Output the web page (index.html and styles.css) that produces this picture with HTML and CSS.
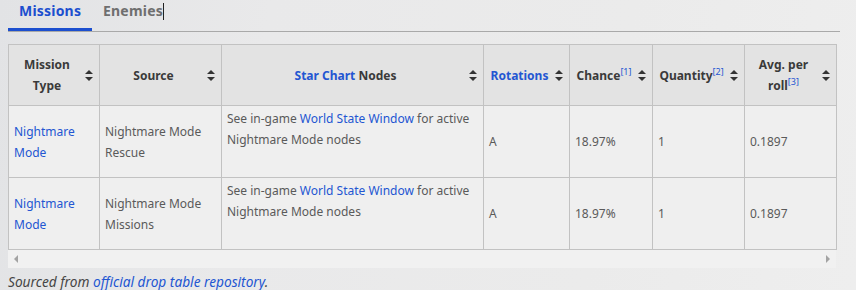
FILE: index.html
```html
<!DOCTYPE html>
<html>
<head>
<meta charset="utf-8">
<link rel="stylesheet" href="styles.css">
</head>
<body>
<div class="page">
  <div class="tabs">
    <div class="tab active">Missions</div>
    <div class="tab">Enemies<span class="caret"></span></div>
  </div>
  <div class="scroller">
    <table class="drops">
      <colgroup>
        <col class="c1"><col class="c2"><col class="c3"><col class="c4"><col class="c5"><col class="c6"><col class="c7">
      </colgroup>
      <thead>
        <tr>
          <th><span class="th-in"><span class="lbl">Mission<br>Type</span><span class="sort"></span></span></th>
          <th><span class="th-in"><span class="lbl">Source</span><span class="sort"></span></span></th>
          <th><span class="th-in"><span class="lbl"><a>Star Chart</a> Nodes</span><span class="sort"></span></span></th>
          <th><span class="th-in"><span class="lbl"><a>Rotations</a></span><span class="sort"></span></span></th>
          <th><span class="th-in"><span class="lbl">Chance<sup>[1]</sup></span><span class="sort"></span></span></th>
          <th><span class="th-in"><span class="lbl">Quantity<sup>[2]</sup></span><span class="sort"></span></span></th>
          <th><span class="th-in"><span class="lbl">Avg. per<br>roll<sup>[3]</sup></span><span class="sort"></span></span></th>
        </tr>
      </thead>
      <tbody>
        <tr>
          <td><a>Nightmare<br>Mode</a></td>
          <td>Nightmare Mode<br>Rescue</td>
          <td class="nodes">See in-game <a>World State Window</a> for active<br>Nightmare Mode nodes</td>
          <td>A</td>
          <td>18.97%</td>
          <td>1</td>
          <td>0.1897</td>
        </tr>
        <tr>
          <td><a>Nightmare<br>Mode</a></td>
          <td>Nightmare Mode<br>Missions</td>
          <td class="nodes">See in-game <a>World State Window</a> for active<br>Nightmare Mode nodes</td>
          <td>A</td>
          <td>18.97%</td>
          <td>1</td>
          <td>0.1897</td>
        </tr>
      </tbody>
    </table>
    <div class="hscroll"><span class="arr left"></span><span class="arr right"></span></div>
  </div>
  <p class="source">Sourced from <a>official drop table repository</a>.</p>
</div>
</body>
</html>
```
FILE: styles.css
```css
html, body {
  margin: 0;
  padding: 0;
}
body {
  width: 856px;
  height: 290px;
  overflow: hidden;
  background: linear-gradient(100deg, #e2e3e5 0%, #e9e9ea 30%, #ebebeb 70%, #eeeeee 100%);
  font-family: "Noto Sans", "DejaVu Sans", sans-serif;
  color: #5a5a5a;
}
.page {
  padding: 0 0 0 8px;
}
a {
  color: #2356d2;
  text-decoration: none;
}
.tabs {
  display: flex;
  width: 832px;
  height: 31px;
  border-bottom: 1px solid #a9a9a9;
  box-sizing: content-box;
}
.tab {
  font-size: 14px;
  font-weight: 700;
  color: #6f6f6f;
  padding: 0 11px;
  height: 28px;
  line-height: 21px;
  letter-spacing: 0.2px;
}
.tab.active {
  color: #1c4fcf;
  border-bottom: 3px solid #1c4fcf;
  width: 62px;
}
.caret {
  display: inline-block;
  width: 1px;
  height: 17px;
  background: #222;
  vertical-align: -4px;
}
.scroller {
  margin-top: 12px;
  width: 828px;
}
.drops {
  border-collapse: collapse;
  table-layout: fixed;
  width: 828px;
  font-size: 12px;
  line-height: 21px;
}
.c1 { width: 91px; }
.c2 { width: 122px; }
.c3 { width: 262px; }
.c4 { width: 86px; }
.c5 { width: 83px; }
.c6 { width: 92px; }
.c7 { width: 92px; }
.drops th, .drops td {
  border: 1px solid #c2c2c2;
}
.drops th {
  background: #e3e3e3;
  color: #3a3a3a;
  font-weight: 700;
  height: 60px;
  padding: 0 6px 0 4px;
}
.th-in {
  display: flex;
  align-items: center;
}
.lbl {
  flex: 1;
  text-align: center;
  line-height: 21px;
}
.drops sup {
  font-size: 9px;
  font-weight: 400;
  color: #2356d2;
  line-height: 0;
  vertical-align: 5px;
}
.sort {
  width: 8px;
  height: 11px;
  flex: none;
  margin-left: 4px;
  position: relative;
}
.sort::before, .sort::after {
  content: "";
  position: absolute;
  left: 0;
  border-left: 4px solid transparent;
  border-right: 4px solid transparent;
}
.sort::before {
  top: 0;
  border-bottom: 4.5px solid #333;
}
.sort::after {
  bottom: 0;
  border-top: 4.5px solid #333;
}
.drops td {
  background: #efefef;
  height: 72px;
  padding: 0 5px;
  vertical-align: middle;
  box-sizing: border-box;
}
.drops td.nodes {
  vertical-align: top;
  padding-top: 2px;
}
.hscroll {
  height: 18px;
  background: #f1f1f1;
  position: relative;
}
.arr {
  position: absolute;
  top: 5px;
  border-top: 4px solid transparent;
  border-bottom: 4px solid transparent;
}
.arr.left {
  left: 6px;
  border-right: 4px solid #a3a3a3;
}
.arr.right {
  right: 6px;
  border-left: 4px solid #a3a3a3;
}
.source {
  margin: 4px 0 0;
  font-size: 13.7px;
  font-style: italic;
  color: #454545;
  line-height: 20px;
}
```
